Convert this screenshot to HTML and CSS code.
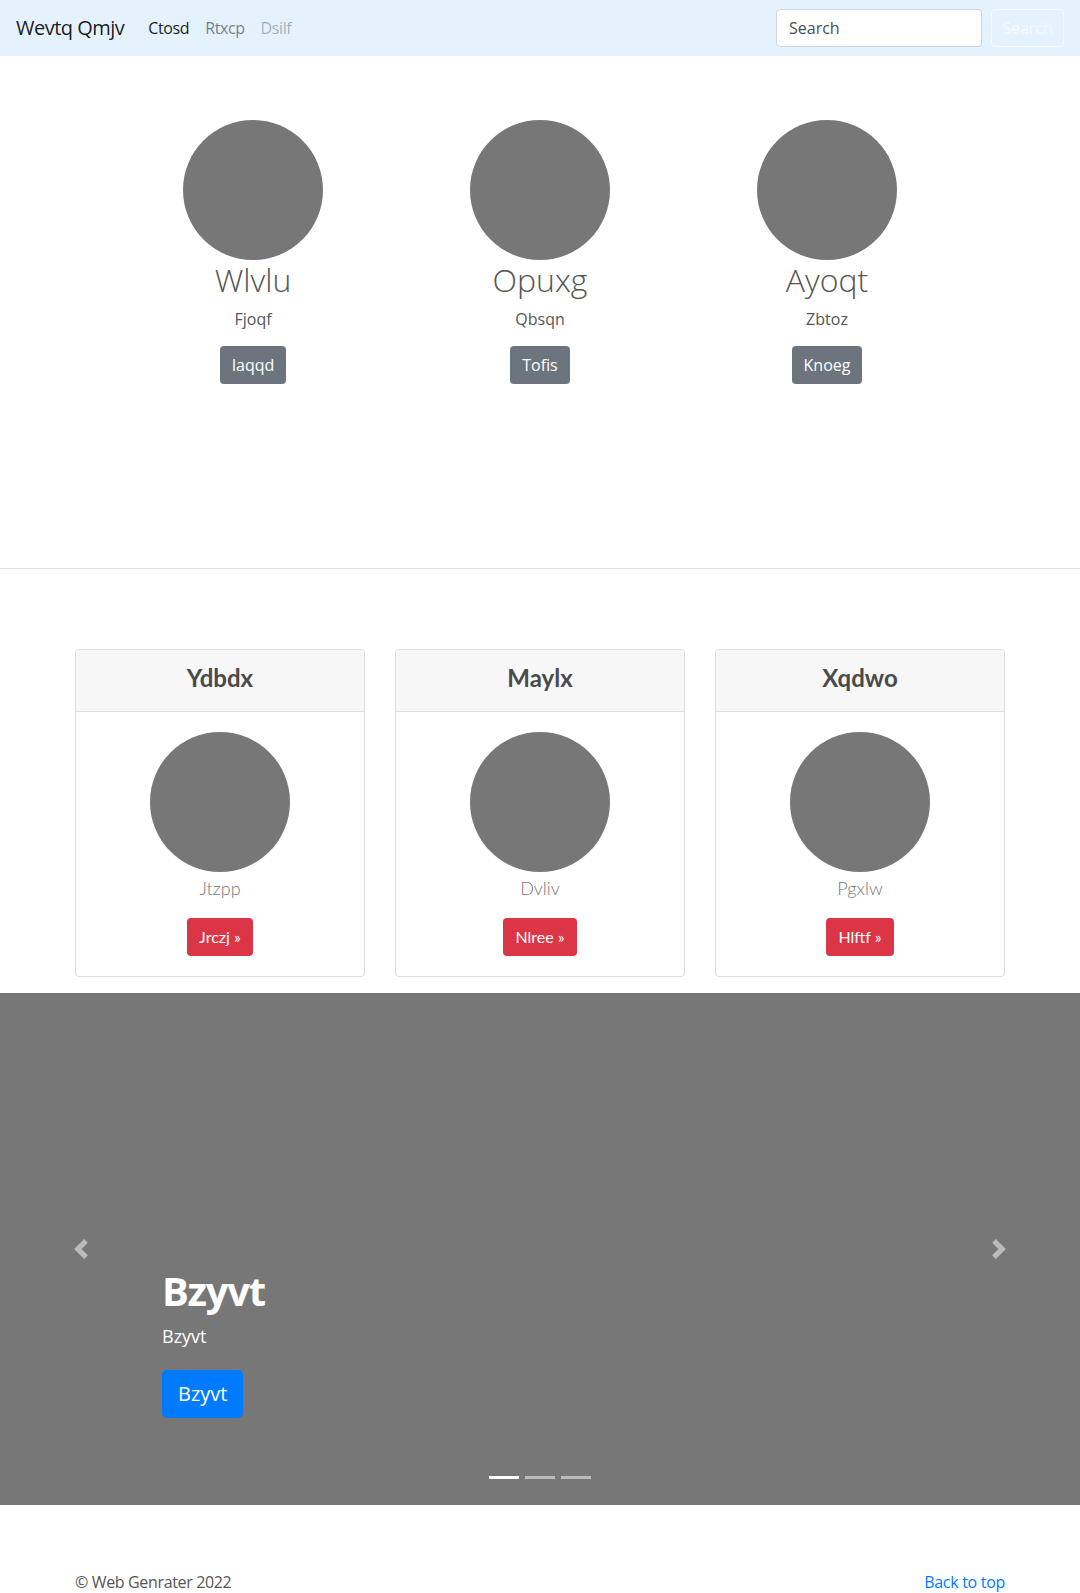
FILE: index.html
```html
<!DOCTYPE html>
<html lang="en">
<head>
<meta charset="utf-8">
<title>Wevtq Qmjv</title>
<link rel="stylesheet" href="styles.css">
</head>
<body>
<nav class="navbar">
  <a class="brand" href="#">Wevtq Qmjv</a>
  <ul class="nav-links">
    <li><a class="nav-link active" href="#">Ctosd</a></li>
    <li><a class="nav-link" href="#">Rtxcp</a></li>
    <li><a class="nav-link disabled" href="#">Dsilf</a></li>
  </ul>
  <form class="search-form">
    <input class="search-input" type="text" value="Search">
    <button class="search-btn" type="button">Search</button>
  </form>
</nav>

<section class="marketing">
  <div class="marketing-row">
    <div class="marketing-col">
      <div class="circle"></div>
      <h2 class="m-title">Wlvlu</h2>
      <p class="m-text">Fjoqf</p>
      <a class="btn btn-secondary" href="#">Iaqqd</a>
    </div>
    <div class="marketing-col">
      <div class="circle"></div>
      <h2 class="m-title">Opuxg</h2>
      <p class="m-text">Qbsqn</p>
      <a class="btn btn-secondary" href="#">Tofis</a>
    </div>
    <div class="marketing-col">
      <div class="circle"></div>
      <h2 class="m-title">Ayoqt</h2>
      <p class="m-text">Zbtoz</p>
      <a class="btn btn-secondary" href="#">Knoeg</a>
    </div>
  </div>
</section>

<hr class="divider">

<section class="cards">
  <div class="card">
    <div class="card-header"><h4 class="card-title">Ydbdx</h4></div>
    <div class="card-body">
      <div class="circle"></div>
      <p class="card-text">Jtzpp</p>
      <a class="btn btn-danger" href="#">Jrczj &raquo;</a>
    </div>
  </div>
  <div class="card">
    <div class="card-header"><h4 class="card-title">Maylx</h4></div>
    <div class="card-body">
      <div class="circle"></div>
      <p class="card-text">Dvliv</p>
      <a class="btn btn-danger" href="#">Nlree &raquo;</a>
    </div>
  </div>
  <div class="card">
    <div class="card-header"><h4 class="card-title">Xqdwo</h4></div>
    <div class="card-body">
      <div class="circle"></div>
      <p class="card-text">Pgxlw</p>
      <a class="btn btn-danger" href="#">Hlftf &raquo;</a>
    </div>
  </div>
</section>

<section class="carousel">
  <a class="control control-prev" href="#">
    <svg viewBox="0 0 8 8" width="20" height="20"><path d="M5.25 0l-4 4 4 4 1.5-1.5L4.25 4l2.5-2.5L5.25 0z"/></svg>
  </a>
  <div class="caption">
    <h1 class="caption-title">Bzyvt</h1>
    <p class="caption-text">Bzyvt</p>
    <a class="btn btn-primary btn-lg" href="#">Bzyvt</a>
  </div>
  <a class="control control-next" href="#">
    <svg viewBox="0 0 8 8" width="20" height="20"><path d="M2.75 0l-1.5 1.5L3.75 4l-2.5 2.5L2.75 8l4-4-4-4z"/></svg>
  </a>
  <ol class="indicators">
    <li class="active"></li>
    <li></li>
    <li></li>
  </ol>
</section>

<footer class="footer">
  <p class="copy">&copy; Web Genrater 2022</p>
  <a class="back-top" href="#">Back to top</a>
</footer>
</body>
</html>
```

FILE: styles.css
```css
* { box-sizing: border-box; }

html, body {
  margin: 0;
  padding: 0;
}

body {
  font-family: "Open Sans", "Noto Sans", Arial, sans-serif;
  font-size: 16px;
  line-height: 1.5;
  color: #212529;
  background: #fff;
}

a { text-decoration: none; }

/* Navbar */
.navbar {
  height: 56px;
  background: #e3f2fd;
  display: flex;
  align-items: center;
  padding: 0 16px;
}

.brand {
  font-size: 20px;
  line-height: 30px;
  color: rgba(0, 0, 0, 0.9);
  margin-right: 16px;
  letter-spacing: -0.5px;
}

.nav-links {
  list-style: none;
  margin: 0;
  padding: 0;
  display: flex;
  flex: 1;
}

.nav-link {
  display: block;
  padding: 8px;
  font-size: 16px;
  color: rgba(0, 0, 0, 0.5);
  letter-spacing: -0.4px;
}
.nav-link.active { color: rgba(0, 0, 0, 0.9); }
.nav-link.disabled { color: rgba(0, 0, 0, 0.3); }

.search-form {
  display: flex;
  align-items: center;
}

.search-input {
  width: 206px;
  height: 38px;
  padding: 6px 12px;
  font-family: inherit;
  font-size: 16px;
  color: #495057;
  background: #fff;
  border: 1px solid #ced4da;
  border-radius: 4px;
  margin-right: 9px;
}

.search-btn {
  width: 73px;
  height: 38px;
  font-family: inherit;
  font-size: 16px;
  color: #f8f9fa;
  background: transparent;
  border: 1px solid #f8f9fa;
  border-radius: 4px;
  padding: 6px 10px;
}

/* Marketing */
.marketing {
  height: 512px;
  padding-top: 64px;
}

.marketing-row {
  width: 861px;
  margin: 0 auto;
  display: grid;
  grid-template-columns: repeat(3, 1fr);
}

.marketing-col {
  display: flex;
  flex-direction: column;
  align-items: center;
  text-align: center;
  color: #555;
}

.circle {
  width: 140px;
  height: 140px;
  border-radius: 50%;
  background: #777;
  flex: none;
}

.m-title {
  font-size: 32px;
  font-weight: 300;
  line-height: 38px;
  margin: 1px 0 8px;
}

.m-text {
  margin: 0 0 15px;
  font-size: 16px;
  line-height: 24px;
}

.btn {
  display: inline-block;
  font-size: 16px;
  line-height: 24px;
  padding: 7px 12px;
  border-radius: 4px;
  color: #fff;
}

.btn-secondary { background: #6c757d; }

.divider {
  margin: 0;
  border: 0;
  border-top: 1px solid #e2e2e2;
}

/* Cards */
.cards {
  width: 930px;
  margin: 80px auto 16px;
  display: grid;
  grid-template-columns: repeat(3, 1fr);
  gap: 30px;
  font-family: Lato, "Open Sans", sans-serif;
}

.card {
  border: 1px solid #dfdfdf;
  border-radius: 4px;
  text-align: center;
  overflow: hidden;
}

.card-header {
  background: #f7f7f7;
  border-bottom: 1px solid #dfdfdf;
  padding: 13px 20px 19px;
}

.card-title {
  margin: 0;
  font-size: 24px;
  font-weight: 700;
  line-height: 29px;
  color: #4a4a4a;
}

.card-body {
  padding: 20px;
  display: flex;
  flex-direction: column;
  align-items: center;
}

.card-text {
  margin: 3px 0 16px;
  font-size: 18px;
  font-weight: 300;
  line-height: 27px;
  color: #777;
}

.btn-danger {
  background: #dc3545;
  font-family: Lato, sans-serif;
}

/* Carousel */
.carousel {
  position: relative;
  height: 512px;
  background: #777;
}

.control {
  position: absolute;
  top: 0;
  bottom: 0;
  width: 162px;
  display: flex;
  align-items: center;
  justify-content: center;
  opacity: 0.5;
}
.control svg { fill: #fff; display: block; }
.control-prev { left: 0; }
.control-next { right: 0; }

.caption {
  position: absolute;
  left: 162px;
  right: 162px;
  bottom: 87px;
  color: #fff;
  text-align: left;
}

.caption-title {
  margin: 0 0 8px;
  font-size: 40px;
  font-weight: 700;
  line-height: 48px;
  letter-spacing: -1.3px;
}

.caption-text {
  margin: 0 0 20px;
  font-size: 18px;
  line-height: 27px;
}

.btn-primary { background: #007bff; }

.btn-lg {
  font-size: 20px;
  line-height: 30px;
  padding: 9px 16px;
  border-radius: 5px;
}

.indicators {
  position: absolute;
  left: 0;
  right: 0;
  bottom: 26px;
  margin: 0;
  padding: 0;
  list-style: none;
  display: flex;
  justify-content: center;
  gap: 6px;
}
.indicators li {
  width: 30px;
  height: 3px;
  background: #fff;
  opacity: 0.5;
}
.indicators li.active { opacity: 1; }

/* Footer */
.footer {
  width: 930px;
  margin: 0 auto;
  padding-top: 65px;
  display: flex;
  justify-content: space-between;
  align-items: flex-start;
}

.copy {
  margin: 0;
  color: #555;
  line-height: 24px;
  letter-spacing: -0.35px;
}

.back-top {
  color: #007bff;
  line-height: 24px;
  letter-spacing: -0.3px;
}
```
